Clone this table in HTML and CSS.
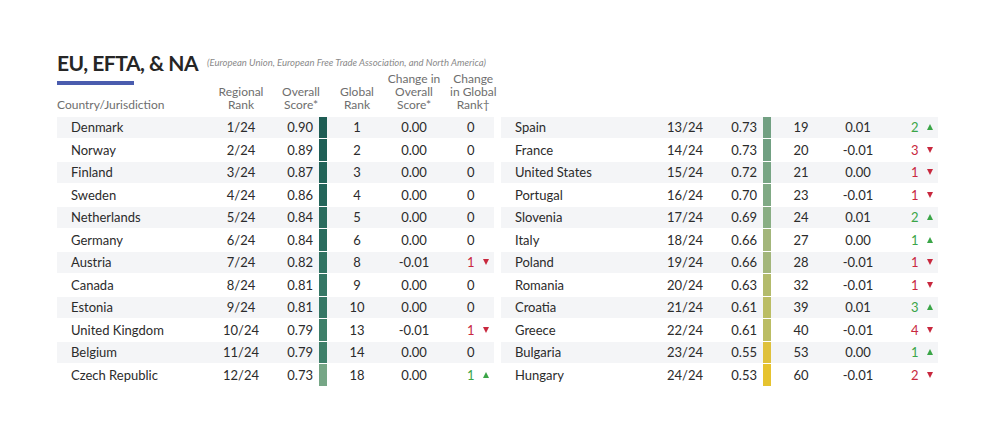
FILE: index.html
```html
<!DOCTYPE html>
<html lang="en">
<head>
<meta charset="utf-8">
<title>EU, EFTA, &amp; NA</title>
<link rel="stylesheet" href="styles.css">
</head>
<body>
<div class="page">
  <div class="title-row">
    <h1 class="title">EU, EFTA, &amp; NA</h1>
    <span class="subtitle">(European Union, European Free Trade Association, and North America)</span>
  </div>
  <div class="head grid">
    <div class="h-first">
      <div class="accent"></div>
      <div class="h-country">Country/Jurisdiction</div>
    </div>
    <div class="h-col">Regional<br>Rank</div>
    <div class="h-col h-score">Overall<br>Score*</div>
    <div class="h-col">Global<br>Rank</div>
    <div class="h-col">Change in<br>Overall<br>Score*</div>
    <div class="h-col h-last">Change<br>in Global<br>Rank†</div>
  </div>
  <div class="tables">
    <div class="table">
      <div class="row grid"><span class="name">Denmark</span><span class="c">1/24</span><span class="score">0.90</span><span class="bar" style="background:#1e5d54"></span><span class="c">1</span><span class="c">0.00</span><span class="chg">0</span></div>
      <div class="row grid"><span class="name">Norway</span><span class="c">2/24</span><span class="score">0.89</span><span class="bar" style="background:#1f5f56"></span><span class="c">2</span><span class="c">0.00</span><span class="chg">0</span></div>
      <div class="row grid"><span class="name">Finland</span><span class="c">3/24</span><span class="score">0.87</span><span class="bar" style="background:#226358"></span><span class="c">3</span><span class="c">0.00</span><span class="chg">0</span></div>
      <div class="row grid"><span class="name">Sweden</span><span class="c">4/24</span><span class="score">0.86</span><span class="bar" style="background:#24655a"></span><span class="c">4</span><span class="c">0.00</span><span class="chg">0</span></div>
      <div class="row grid"><span class="name">Netherlands</span><span class="c">5/24</span><span class="score">0.84</span><span class="bar" style="background:#2a6c5e"></span><span class="c">5</span><span class="c">0.00</span><span class="chg">0</span></div>
      <div class="row grid"><span class="name">Germany</span><span class="c">6/24</span><span class="score">0.84</span><span class="bar" style="background:#2a6c5e"></span><span class="c">6</span><span class="c">0.00</span><span class="chg">0</span></div>
      <div class="row grid"><span class="name">Austria</span><span class="c">7/24</span><span class="score">0.82</span><span class="bar" style="background:#317362"></span><span class="c">8</span><span class="c">-0.01</span><span class="chg down">1<i class="tri-down"></i></span></div>
      <div class="row grid"><span class="name">Canada</span><span class="c">8/24</span><span class="score">0.81</span><span class="bar" style="background:#357765"></span><span class="c">9</span><span class="c">0.00</span><span class="chg">0</span></div>
      <div class="row grid"><span class="name">Estonia</span><span class="c">9/24</span><span class="score">0.81</span><span class="bar" style="background:#357765"></span><span class="c">10</span><span class="c">0.00</span><span class="chg">0</span></div>
      <div class="row grid"><span class="name">United Kingdom</span><span class="c">10/24</span><span class="score">0.79</span><span class="bar" style="background:#3e7f69"></span><span class="c">13</span><span class="c">-0.01</span><span class="chg down">1<i class="tri-down"></i></span></div>
      <div class="row grid"><span class="name">Belgium</span><span class="c">11/24</span><span class="score">0.79</span><span class="bar" style="background:#3e7f69"></span><span class="c">14</span><span class="c">0.00</span><span class="chg">0</span></div>
      <div class="row grid"><span class="name">Czech Republic</span><span class="c">12/24</span><span class="score">0.73</span><span class="bar" style="background:#76a686"></span><span class="c">18</span><span class="c">0.00</span><span class="chg up">1<i class="tri-up"></i></span></div>
    </div>
    <div class="table">
      <div class="row grid"><span class="name">Spain</span><span class="c">13/24</span><span class="score">0.73</span><span class="bar" style="background:#71a082"></span><span class="c">19</span><span class="c">0.01</span><span class="chg up">2<i class="tri-up"></i></span></div>
      <div class="row grid"><span class="name">France</span><span class="c">14/24</span><span class="score">0.73</span><span class="bar" style="background:#71a082"></span><span class="c">20</span><span class="c">-0.01</span><span class="chg down">3<i class="tri-down"></i></span></div>
      <div class="row grid"><span class="name">United States</span><span class="c">15/24</span><span class="score">0.72</span><span class="bar" style="background:#77a584"></span><span class="c">21</span><span class="c">0.00</span><span class="chg down">1<i class="tri-down"></i></span></div>
      <div class="row grid"><span class="name">Portugal</span><span class="c">16/24</span><span class="score">0.70</span><span class="bar" style="background:#80aa85"></span><span class="c">23</span><span class="c">-0.01</span><span class="chg down">1<i class="tri-down"></i></span></div>
      <div class="row grid"><span class="name">Slovenia</span><span class="c">17/24</span><span class="score">0.69</span><span class="bar" style="background:#89ae84"></span><span class="c">24</span><span class="c">0.01</span><span class="chg up">2<i class="tri-up"></i></span></div>
      <div class="row grid"><span class="name">Italy</span><span class="c">18/24</span><span class="score">0.66</span><span class="bar" style="background:#a3b67b"></span><span class="c">27</span><span class="c">0.00</span><span class="chg up">1<i class="tri-up"></i></span></div>
      <div class="row grid"><span class="name">Poland</span><span class="c">19/24</span><span class="score">0.66</span><span class="bar" style="background:#a3b67b"></span><span class="c">28</span><span class="c">-0.01</span><span class="chg down">1<i class="tri-down"></i></span></div>
      <div class="row grid"><span class="name">Romania</span><span class="c">20/24</span><span class="score">0.63</span><span class="bar" style="background:#b3bb6c"></span><span class="c">32</span><span class="c">-0.01</span><span class="chg down">1<i class="tri-down"></i></span></div>
      <div class="row grid"><span class="name">Croatia</span><span class="c">21/24</span><span class="score">0.61</span><span class="bar" style="background:#bbbd64"></span><span class="c">39</span><span class="c">0.01</span><span class="chg up">3<i class="tri-up"></i></span></div>
      <div class="row grid"><span class="name">Greece</span><span class="c">22/24</span><span class="score">0.61</span><span class="bar" style="background:#bbbd64"></span><span class="c">40</span><span class="c">-0.01</span><span class="chg down">4<i class="tri-down"></i></span></div>
      <div class="row grid"><span class="name">Bulgaria</span><span class="c">23/24</span><span class="score">0.55</span><span class="bar" style="background:#dfc13c"></span><span class="c">53</span><span class="c">0.00</span><span class="chg up">1<i class="tri-up"></i></span></div>
      <div class="row grid"><span class="name">Hungary</span><span class="c">24/24</span><span class="score">0.53</span><span class="bar" style="background:#e6c32f"></span><span class="c">60</span><span class="c">-0.01</span><span class="chg down">2<i class="tri-down"></i></span></div>
    </div>
  </div>
</div>
</body>
</html>
```

FILE: styles.css
```css
* { box-sizing: border-box; }
html, body { margin: 0; padding: 0; background: #fff; }
body {
  font-family: Lato, "Open Sans", "Liberation Sans", sans-serif;
  color: #2b2b2b;
}
.page {
  padding: 52px 0 0 57px;
  width: 990px;
  height: 440px;
}
.title-row {
  display: flex;
  align-items: baseline;
  gap: 9px;
  margin-bottom: -2.5px;
}
.title {
  margin: 0;
  font-size: 21px;
  line-height: 22px;
  font-weight: 700;
  letter-spacing: -0.5px;
  color: #262626;
}
.subtitle {
  font-size: 9.5px;
  font-style: italic;
  color: #8a8a8a;
  position: relative;
  top: -5px;
}
.grid {
  display: grid;
  grid-template-columns: 150px 68px 44px 8px 60px 54px 1fr;
  width: 437px;
}
.head {
  align-items: end;
  color: #6e6e6e;
  font-size: 12px;
  line-height: 13px;
}
.h-first {
  display: flex;
  flex-direction: column;
  align-items: flex-start;
}
.accent {
  width: 77px;
  height: 4px;
  background: #4a5cae;
  margin-bottom: 12.5px;
}
.h-col { text-align: center; white-space: nowrap; }
.h-score { grid-column: span 2; }
.h-last { padding-left: 9px; }
.tables {
  display: flex;
  gap: 7px;
  margin-top: 6px;
}
.table { display: flex; flex-direction: column; width: 437px; }
.row {
  height: 22.5px;
  align-items: center;
  font-size: 13px;
  color: #2b2b2b;
  border-bottom: 1px solid #fff;
}
.row:nth-child(odd) { background: #f4f5f7; }
.name { padding-left: 14px; white-space: nowrap; }
.c { text-align: center; }
.score { text-align: right; padding-right: 6px; }
.bar { align-self: stretch; }
.chg {
  padding-left: 26px;
  display: flex;
  align-items: center;
  gap: 8px;
}
.up { color: #3aa547; }
.down { color: #c8283e; }
.tri-up, .tri-down {
  display: inline-block;
  width: 0;
  height: 0;
  border-left: 3.5px solid transparent;
  border-right: 3.5px solid transparent;
}
.tri-up { border-bottom: 6px solid #3aa547; }
.tri-down { border-top: 6px solid #c8283e; }
```
